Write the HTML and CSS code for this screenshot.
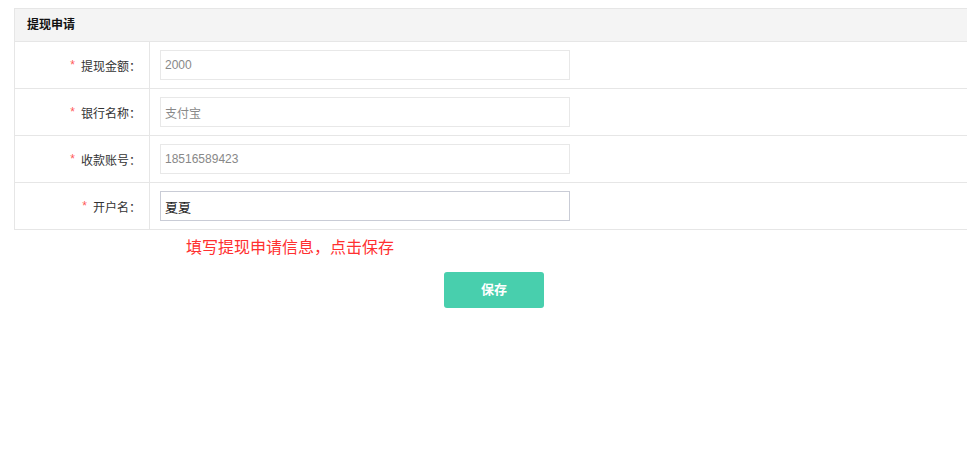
FILE: index.html
```html
<!DOCTYPE html>
<html lang="zh">
<head>
<meta charset="utf-8">
<title>提现申请</title>
<link rel="stylesheet" href="styles.css">
</head>
<body>
<div class="page">
  <div class="panel">
    <div class="panel-head">提现申请</div>
    <div class="row">
      <div class="label"><span class="req">*</span>提现金额<span class="colon">：</span></div>
      <div class="field"><input class="input" type="text" value="2000" readonly></div>
    </div>
    <div class="row">
      <div class="label"><span class="req">*</span>银行名称<span class="colon">：</span></div>
      <div class="field"><input class="input" type="text" value="支付宝" readonly></div>
    </div>
    <div class="row">
      <div class="label"><span class="req">*</span>收款账号<span class="colon">：</span></div>
      <div class="field"><input class="input" type="text" value="18516589423" readonly></div>
    </div>
    <div class="row">
      <div class="label"><span class="req">*</span>开户名<span class="colon">：</span></div>
      <div class="field"><input class="input input-active" type="text" value="夏夏"></div>
    </div>
  </div>
  <div class="hint">填写提现申请信息，点击保存</div>
  <div class="actions"><button class="btn" type="button">保存</button></div>
</div>
</body>
</html>
```

FILE: styles.css
```css
html, body {
  margin: 0;
  padding: 0;
  background: #fff;
}
body {
  font-family: "Liberation Sans", "Noto Sans CJK SC", sans-serif;
  font-size: 12px;
  color: #333;
  overflow: hidden;
}
.page {
  padding: 8px 0 0 14px;
}
.panel {
  border: 1px solid #e6e6e6;
  border-right: none;
  margin-right: -20px;
}
.panel-head {
  height: 32px;
  line-height: 32px;
  background: #f4f4f4;
  padding-left: 12px;
  font-weight: bold;
  font-size: 12px;
  color: #111;
  border-bottom: 1px solid #e6e6e6;
}
.row {
  display: grid;
  grid-template-columns: 135px 1fr;
  height: 46px;
  border-bottom: 1px solid #e6e6e6;
}
.row:last-child {
  border-bottom: none;
}
.label {
  border-right: 1px solid #e6e6e6;
  display: flex;
  align-items: center;
  justify-content: flex-end;
  padding-right: 8px;
  color: #333;
}
.req {
  color: #ff5a5a;
  margin-right: 6px;
}
.colon {
  display: inline-block;
  width: 12px;
  text-align: center;
}
.field {
  display: flex;
  align-items: center;
  padding-left: 10px;
}
.input {
  box-sizing: border-box;
  width: 410px;
  height: 30px;
  border: 1px solid #e8e8e8;
  padding: 0 4px;
  font-family: "Liberation Sans", "Noto Sans CJK SC", sans-serif;
  font-size: 12px;
  color: #888;
  outline: none;
  background: #fff;
}
.input-active {
  border-color: #c9ccd6;
  color: #222;
  font-size: 13px;
}
.hint {
  margin: 6px 0 0 172px;
  font-size: 16px;
  line-height: 20px;
  color: #ff3030;
  font-family: "Noto Sans CJK SC", sans-serif;
}
.actions {
  margin-top: 16px;
  padding-left: 430px;
}
.btn {
  width: 100px;
  height: 36px;
  padding: 0 0 3px;
  border: none;
  border-radius: 3px;
  background: #48cfad;
  color: #fff;
  font-weight: bold;
  font-size: 13px;
  font-family: "Noto Sans CJK SC", sans-serif;
  cursor: pointer;
}
```
